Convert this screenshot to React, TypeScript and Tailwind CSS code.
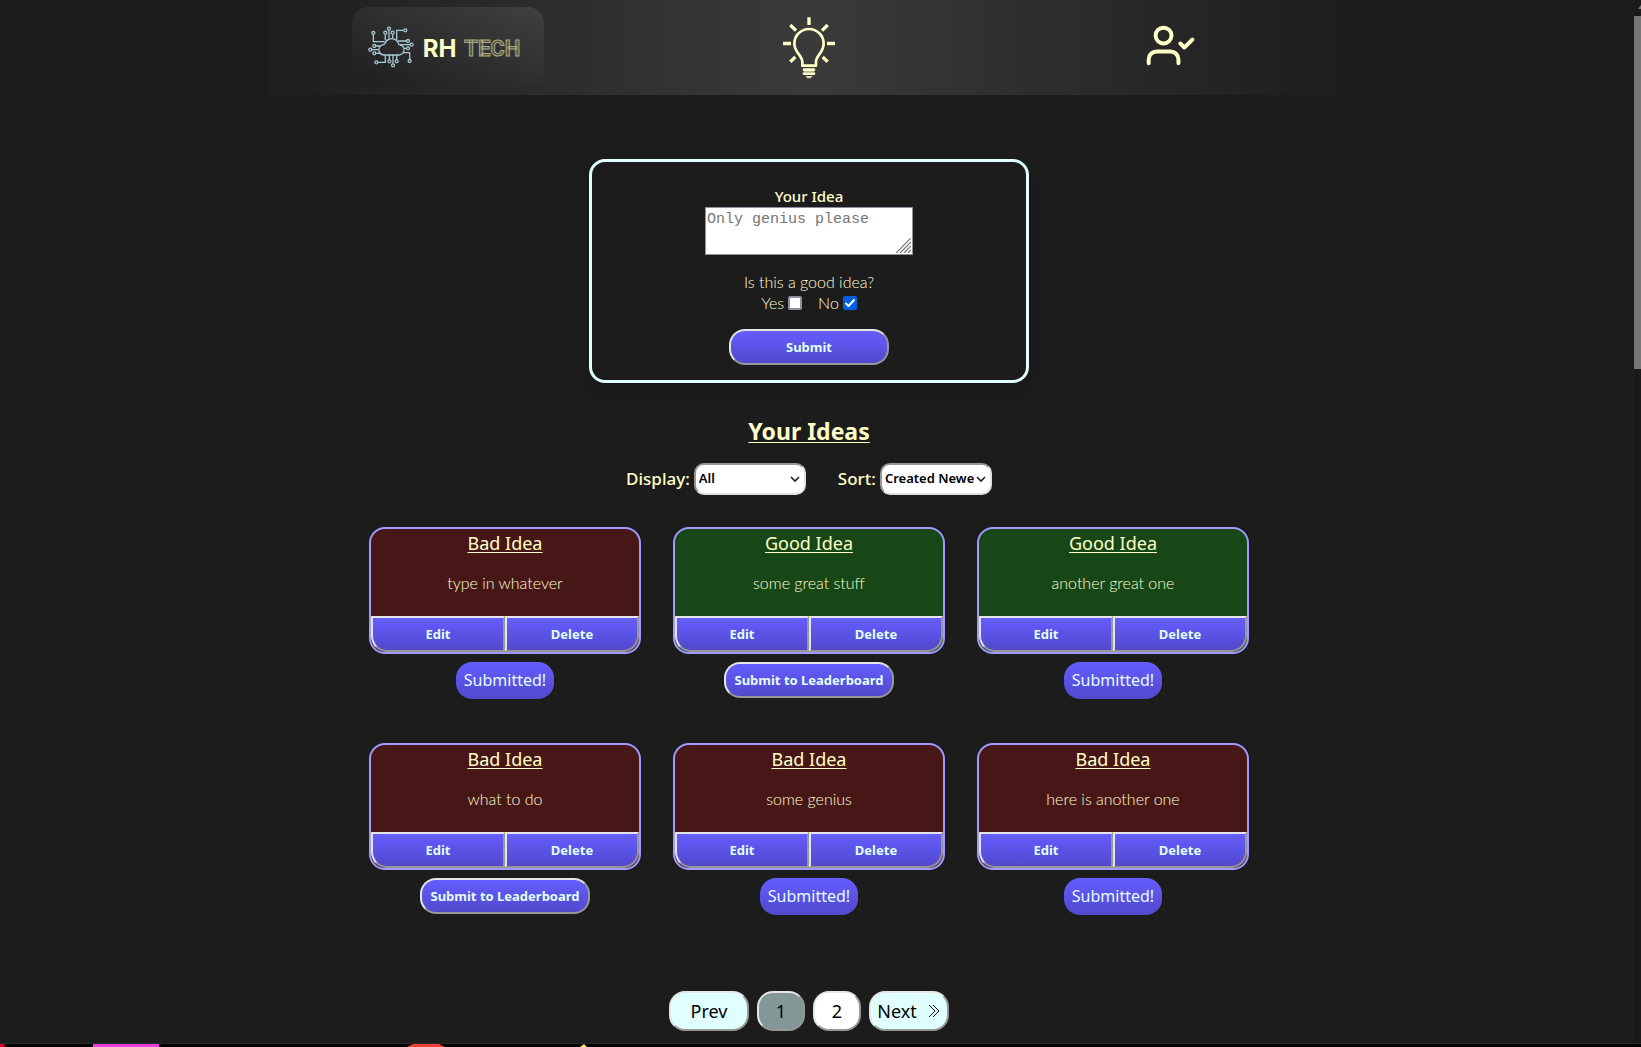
import React, { useState } from "react";

type Idea = { good: boolean; text: string; submitted: boolean };

const ideas: Idea[] = [
  { good: false, text: "type in whatever", submitted: true },
  { good: true, text: "some great stuff", submitted: false },
  { good: true, text: "another great one", submitted: true },
  { good: false, text: "what to do", submitted: false },
  { good: false, text: "some genius", submitted: true },
  { good: false, text: "here is another one", submitted: true },
];

const bevel = "border-2 border-t-[#e6e6e6] border-l-[#e6e6e6] border-r-[#979797] border-b-[#979797]";
const violet = "bg-linear-to-b from-[#655dff] to-[#5149cc] text-[#e0ffff]";
const buttonText = "font-['Noto_Sans'] text-[13px] leading-4 font-bold";

function CloudLogo() {
  const nodes = [
    [396, 101], [432, 100], [443, 88], [454, 100], [492, 93], [500, 125], [511, 136], [500, 147],
    [505, 185], [466, 186], [455, 198], [444, 186], [405, 189], [399, 162], [387, 151], [399, 140],
  ];
  return (
    <svg viewBox="380 80 141 126" className="h-[42px] w-[47px] shrink-0" fill="none" stroke="#a9cdd6" strokeWidth="3.8" aria-hidden="true">
      {nodes.map(([x, y]) => (
        <circle key={`${x}-${y}`} cx={x} cy={y} r="4.5" />
      ))}
      <path d="M396 106V127H430M432 105V123M443 93V117M454 105V117M487 93H466V123M495 125H470M506 136H476M495 147H488M485 160H505V180M466 167V181M455 167V193M444 167V181M432 167V189H410M404 162H416M392 151H412M404 140H418" />
      <path d="M427 167C413 165 409 152 415 143C419 137 425 136 430 134C434 119 451 114 462 121C469 125 471 130 473 136C485 137 491 147 487 157C485 163 481 166 474 167Z" />
    </svg>
  );
}

function Bulb() {
  return (
    <svg viewBox="125 45 162 189" className="h-[63px] w-[54px]" fill="none" stroke="#ffffc8" strokeWidth="8" aria-hidden="true">
      <path d="M186 194V182C186 164 162 154 162 128A44 44 0 0 1 250 128C250 154 227 164 227 182V194Z" strokeLinejoin="round" />
      <path d="M206 49V72M128 127.500H152M260 127.500H284M150 72L167 89M262 72L245 89M150 182L165 168M262 182L247 168" strokeWidth="10" />
      <path d="M191 206H221M191 218H221" strokeWidth="8" strokeLinecap="round" />
      <path d="M190 212H222" strokeWidth="4" stroke="#b9b893" />
      <path d="M195 225H217L211 232H201Z" fill="#d8d7aa" stroke="none" />
    </svg>
  );
}

function UserCheck() {
  return (
    <svg viewBox="76 73 148 124" className="h-[41px] w-[49px]" fill="none" stroke="#ffffc8" strokeWidth="12" strokeLinecap="round" strokeLinejoin="round" aria-hidden="true">
      <circle cx="129" cy="105" r="24" />
      <path d="M84 189V177A24 24 0 0 1 108 153H150A24 24 0 0 1 174 177V189M180 129L192 141L216 117" />
    </svg>
  );
}

function Header() {
  return (
    <header className="mx-auto grid h-[95px] w-[67%] grid-cols-3 items-center justify-items-center bg-linear-to-r from-[#1e1e1e] via-[#3a3a3a] to-[#1d1d1d] pb-px">
      <a href="#home" aria-label="RH Tech" className="flex h-20 w-48 items-center gap-2 rounded-2xl bg-linear-to-tr from-[#1e1e1e] to-[#404040] pl-4">
        <CloudLogo />
        <span className="flex items-center gap-2 pt-1 leading-6">
          <span className="font-['Inter'] text-2xl font-bold text-[#ffffc8]">RH</span>
          <span className="font-['Roboto'] text-[22px] font-bold text-[#55553f] [-webkit-text-stroke:1px_#a9a982]">TECH</span>
        </span>
      </a>
      <a href="#ideas" aria-label="Ideas"><Bulb /></a>
      <a href="#account" aria-label="Account" className="pb-1"><UserCheck /></a>
    </header>
  );
}

function Tick({ label, checked, onPick }: { label: string; checked: boolean; onPick: () => void }) {
  return (
    <label className="flex items-center gap-1">
      {label}
      <span className="grid place-items-center">
        <input
          type="checkbox"
          checked={checked}
          onChange={onPick}
          className="col-start-1 row-start-1 size-3.5 appearance-none rounded-xs border-2 border-[#8f8f9d] bg-white checked:border-[#0060df] checked:bg-[#0060df]"
        />
        {checked && (
          <svg viewBox="0 0 14 14" className="pointer-events-none col-start-1 row-start-1 size-3.5" fill="none" stroke="#fff" strokeWidth="2" strokeLinecap="round" strokeLinejoin="round" aria-hidden="true">
            <path d="M3 7.500L5.500 10L11 4" />
          </svg>
        )}
      </span>
    </label>
  );
}

function IdeaForm() {
  const [good, setGood] = useState(false);
  return (
    <form onSubmit={(e) => e.preventDefault()} className="mt-16 flex w-[440px] flex-col items-center rounded-2xl border-3 border-[#e0ffff] pt-6 pb-[15px] shadow-lg">
      <label htmlFor="idea" className="font-['Noto_Sans'] text-[15px] leading-[21px] font-medium">Your Idea</label>
      <div className="relative flex">
        <textarea id="idea" placeholder="Only genius please" className="h-12 w-52 resize-none border border-[#8f8f9d] bg-white px-px font-['Liberation_Mono'] text-[15px] leading-6 text-black placeholder:text-[#757575]" />
        <svg viewBox="0 0 15 15" className="pointer-events-none absolute right-0.5 bottom-0.5 size-[15px]" stroke="#777" strokeWidth="1.2" aria-hidden="true">
          <path d="M0 15L15 0M4 15L15 4M8 15L15 8M12 15L15 12" />
        </svg>
      </div>
      <fieldset className="mt-4 flex flex-col items-center font-['Lato'] text-base leading-[21px] font-light text-[#ffffd2]">
        <legend className="w-full text-center">Is this a good idea?</legend>
        <div className="flex gap-4">
          <Tick label="Yes" checked={good} onPick={() => setGood(true)} />
          <Tick label="No" checked={!good} onPick={() => setGood(false)} />
        </div>
      </fieldset>
      <button type="submit" className={`mt-4 h-9 w-40 rounded-2xl ${bevel} ${violet} ${buttonText}`}>Submit</button>
    </form>
  );
}

function Picker({ id, label, options }: { id: string; label: string; options: string[] }) {
  return (
    <div className="flex items-center gap-1">
      <label htmlFor={id} className="font-['Noto_Sans'] text-[17px] leading-6 font-medium">{label}</label>
      <div className="relative flex">
        <select id={id} className="h-8 w-28 appearance-none rounded-[10px] border-2 border-t-[#979797] border-r-[#e0e0e0] border-b-[#e0e0e0] border-l-[#979797] bg-white pr-4 pl-[3px] font-['Noto_Sans'] text-[13px] font-semibold text-black">
          {options.map((o) => <option key={o}>{o}</option>)}
        </select>
        <svg viewBox="0 0 10 10" className="pointer-events-none absolute top-[11px] right-1.5 size-2.5" fill="none" stroke="#222" strokeWidth="1.6" aria-hidden="true">
          <path d="M1 3L5 7L9 3" />
        </svg>
      </div>
    </div>
  );
}

function IdeaCard({ idea }: { idea: Idea }) {
  return (
    <li className="flex h-[216px] flex-col items-center gap-2">
      <article className={`flex w-full flex-col overflow-hidden rounded-2xl border-2 border-[#a09aff] text-center ${idea.good ? "bg-[#174716]" : "bg-[#471717]"}`}>
        <h3 className="font-['Noto_Sans'] text-lg leading-7 underline underline-offset-2">{idea.good ? "Good Idea" : "Bad Idea"}</h3>
        <p className="mt-3.5 mb-[21px] font-['Lato'] text-base leading-6 font-light text-[#ffffd2]">{idea.text}</p>
        <div className="grid grid-cols-2">
          <button type="button" className={`h-9 rounded-bl-2xl ${bevel} ${violet} ${buttonText}`}>Edit</button>
          <button type="button" className={`h-9 rounded-br-2xl ${bevel} ${violet} ${buttonText}`}>Delete</button>
        </div>
      </article>
      {idea.submitted ? (
        <p className={`rounded-2xl px-2 py-1.5 font-['Noto_Sans'] text-base leading-[25px] ${violet}`}>Submitted!</p>
      ) : (
        <button type="button" className={`h-9 rounded-2xl px-2 ${bevel} ${violet} ${buttonText}`}>Submit to Leaderboard</button>
      )}
    </li>
  );
}

function Pagination() {
  const base = `flex h-10 items-center justify-center rounded-2xl font-['Noto_Sans'] text-lg text-black ${bevel}`;
  return (
    <nav aria-label="Pages" className="mt-8 flex gap-2">
      <button type="button" className={`${base} w-20 bg-[#e0ffff]`}>Prev</button>
      <button type="button" aria-current="page" className={`${base} w-12 bg-[#839896]`}>1</button>
      <button type="button" className={`${base} w-12 bg-white`}>2</button>
      <button type="button" className={`${base} w-20 gap-2.5 bg-[#e0ffff]`}>
        Next
        <svg viewBox="0 0 14 14" className="size-3.5" fill="none" stroke="#111" strokeWidth="1" aria-hidden="true">
          <path d="M2 1L8 7L2 13M6 1L12 7L6 13" />
        </svg>
      </button>
    </nav>
  );
}

export default function App() {
  return (
    <div className="flex min-h-screen flex-col bg-[#1c1c1c] text-[#ffffc8]">
      <div className="flex flex-1">
        <div className="flex-1 pr-4">
          <Header />
          <main className="flex flex-col items-center">
            <IdeaForm />
            <h2 className="mt-8 font-['Noto_Sans'] text-[23px] leading-8 font-bold underline decoration-1 underline-offset-2">Your Ideas</h2>
            <div className="mt-4 flex gap-8">
              <Picker id="display" label="Display:" options={["All", "Good", "Bad"]} />
              <Picker id="sort" label="Sort:" options={["Created Newest", "Created Oldest"]} />
            </div>
            <ul className="mt-8 grid w-full max-w-[880px] grid-cols-3 gap-x-8">
              {ideas.map((idea) => <IdeaCard key={idea.text} idea={idea} />)}
            </ul>
            <Pagination />
          </main>
        </div>
        <div className="flex w-[7px] flex-col overflow-hidden bg-[#191919]" aria-hidden="true">
          <svg viewBox="0 0 7 16" className="h-4 w-[7px]"><path d="M4 9L7 5V9Z" fill="#777" /></svg>
          <div className="h-[353px] bg-[#787776]" />
        </div>
      </div>
      <footer className="h-1 overflow-hidden border-t border-[#2a2a2a] bg-black">
        <svg viewBox="0 0 620 4" className="h-1 w-[620px]" aria-hidden="true">
          <path d="M0 0H4L5 3H0Z" fill="#d80027" />
          <path d="M93 0H159V4H93Z" fill="#e83fdc" />
          <path d="M407 3L413 0H439L445 3Z" fill="#ee4035" />
          <path d="M580 3L584 0L587 3Z" fill="#ffea4a" />
        </svg>
      </footer>
    </div>
  );
}
